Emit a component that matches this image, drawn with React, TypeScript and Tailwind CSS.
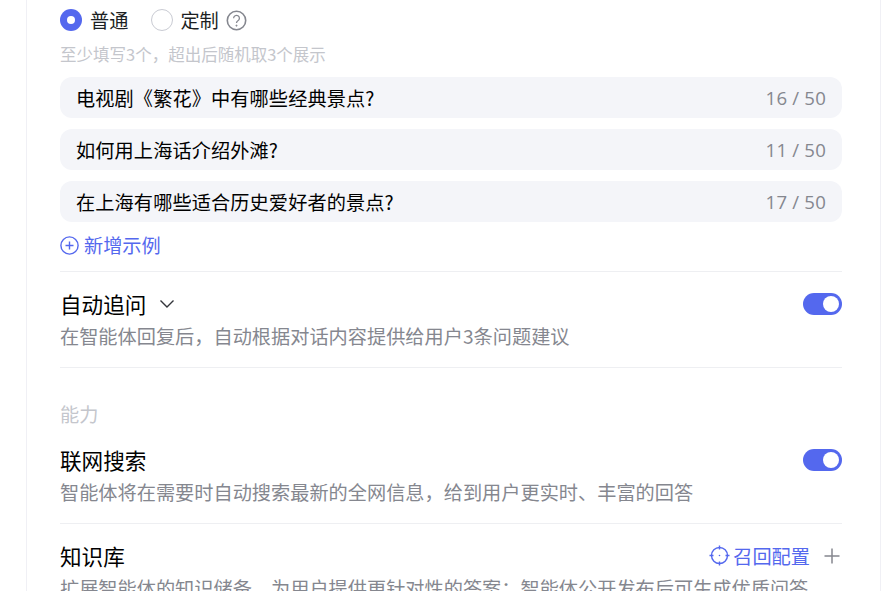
import React from 'react';

const Toggle = () => (
  <div className="flex h-[22px] w-[39px] items-center justify-end rounded-full bg-[#5468ee] pr-[3px]">
    <div className="h-[16px] w-[16px] rounded-full bg-white" />
  </div>
);

const SAMPLES = [
  { text: '电视剧《繁花》中有哪些经典景点?', count: '16 / 50' },
  { text: '如何用上海话介绍外滩?', count: '11 / 50' },
  { text: '在上海有哪些适合历史爱好者的景点?', count: '17 / 50' },
];

export default function App() {
  return (
    <div
      className="h-[591px] w-[890px] overflow-hidden bg-white text-black"
      style={{ fontFamily: '"Noto Sans CJK SC", "Noto Sans", sans-serif' }}
    >
      <div className="ml-[26px] h-full w-[855px] border-x border-[#f0f0f5] pl-[33px] pr-[38px] pt-[6px]">
        {/* Radios */}
        <div className="flex h-[28px] items-center text-[19.2px] text-[#1c1f23]">
          <span className="flex h-[22px] w-[22px] items-center justify-center rounded-full bg-[#5468ee]">
            <span className="h-[8px] w-[8px] rounded-full bg-white" />
          </span>
          <span className="ml-[8px]">普通</span>
          <span className="ml-[23px] h-[22px] w-[22px] rounded-full border border-[#c9cbd3]" />
          <span className="ml-[7px]">定制</span>
          <svg className="ml-[7px]" width="21" height="21" viewBox="0 0 21 21" fill="none" stroke="#85878f" strokeWidth="1.6">
            <circle cx="10.5" cy="10.5" r="9.2" />
            <path d="M7.6 8.2a2.9 2.9 0 1 1 4.3 2.6c-.9.5-1.4 1-1.4 2.2" strokeWidth="1.3" />
            <circle cx="10.5" cy="15.6" r=".7" fill="#85878f" strokeWidth=".6" />
          </svg>
        </div>

        <p className="mt-[6px] text-[16.5px] leading-[28px] text-[#c4c6cc]">至少填写3个，超出后随机取3个展示</p>

        {/* Samples */}
        <div className="mt-[9px] flex flex-col gap-[11px]">
          {SAMPLES.map((s) => (
            <div key={s.text} className="flex h-[41px] items-center justify-between rounded-[12px] bg-[#f4f5f9] px-[16px]">
              <span className="translate-y-px text-[19.2px] tracking-[0.1px]">{s.text}</span>
              <span className="text-[18.6px] tracking-[0.2px] text-[#85878f]" style={{ fontFamily: '"Open Sans", sans-serif' }}>{s.count}</span>
            </div>
          ))}
        </div>

        <div className="mt-[9px] flex h-[28px] items-center gap-[5px] text-[19.2px] text-[#5468ee]">
          <svg width="19" height="19" viewBox="0 0 19 19" fill="none" stroke="#5468ee" strokeWidth="1.4">
            <circle cx="9.5" cy="9.5" r="8.6" />
            <path d="M9.5 5.5v8M5.5 9.5h8" />
          </svg>
          新增示例
        </div>

        <div className="mt-[12px] border-t border-[#eeeff2]" />

        {/* Auto follow up */}
        <div className="mt-[16px] flex h-[32px] items-center justify-between">
          <div className="flex items-center gap-[13px] text-[21.6px] leading-[30px]">
            自动追问
            <svg width="16" height="10" viewBox="0 0 16 10" fill="none" stroke="#33353b" strokeWidth="1.4">
              <path d="M1.5 1.5 8 8l6.5-6.5" />
            </svg>
          </div>
          <Toggle />
        </div>
        <p className="mt-[2px] text-[19.2px] leading-[28px] text-[#85878f]">在智能体回复后，自动根据对话内容提供给用户3条问题建议</p>

        <div className="mt-[17px] border-t border-[#eeeff2]" />

        <p className="mt-[32px] text-[19.2px] leading-[28px] text-[#c4c6cc]">能力</p>

        {/* Web search */}
        <div className="mt-[16px] flex h-[32px] items-center justify-between">
          <span className="text-[21.6px] leading-[30px]">联网搜索</span>
          <Toggle />
        </div>
        <p className="mt-[2px] text-[19.2px] leading-[28px] text-[#85878f]">智能体将在需要时自动搜索最新的全网信息，给到用户更实时、丰富的回答</p>

        <div className="mt-[17px] border-t border-[#eeeff2]" />

        {/* Knowledge base */}
        <div className="mt-[16px] flex h-[32px] items-center justify-between">
          <span className="text-[21.6px] leading-[30px]">知识库</span>
          <div className="mr-[2px] flex items-center text-[19.2px] text-[#5468ee]">
            <svg className="mr-[3px]" width="21" height="21" viewBox="0 0 21 21" fill="none" stroke="#5468ee" strokeWidth="1.4">
              <circle cx="10.5" cy="10.5" r="8" />
              <path d="M10.5 .5v4M10.5 16.5v4M.5 10.5h4M16.5 10.5h4" />
              <circle cx="10.5" cy="10.5" r=".8" fill="#5468ee" stroke="none" />
            </svg>
            召回配置
            <svg className="ml-[14px]" width="16" height="16" viewBox="0 0 16 16" fill="none" stroke="#85878f" strokeWidth="1.5">
              <path d="M8 .5v15M.5 8h15" />
            </svg>
          </div>
        </div>
        <p className="mt-[2px] whitespace-nowrap text-[19.2px] leading-[28px] text-[#85878f]">扩展智能体的知识储备，为用户提供更针对性的答案；智能体公开发布后可生成优质问答</p>
      </div>
    </div>
  );
}
